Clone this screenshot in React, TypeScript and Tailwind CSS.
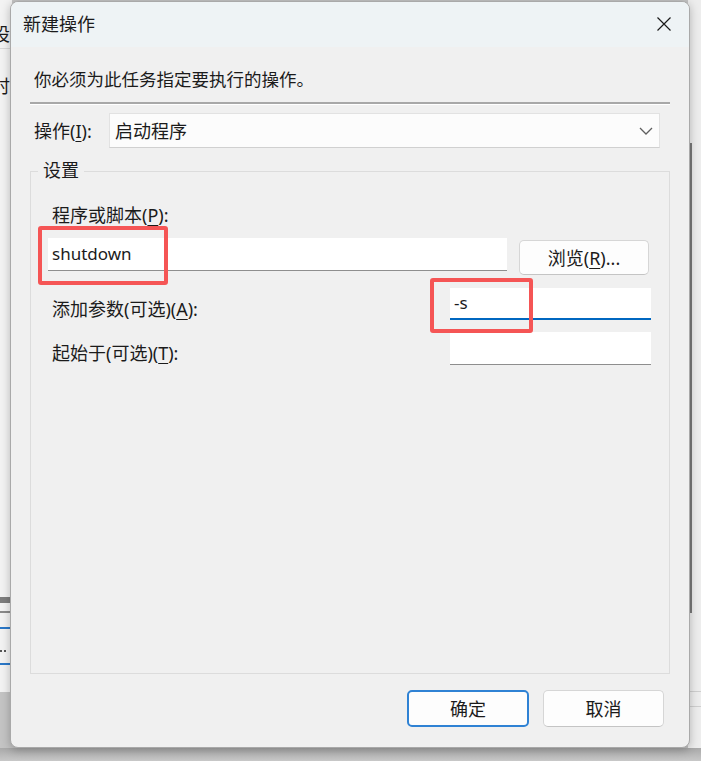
import React from "react";

const font = { fontFamily: '"Noto Sans", "Noto Sans CJK SC", sans-serif' };

function U({ c }: { c: string }) {
  return <span className="underline underline-offset-[3px] decoration-1">{c}</span>;
}

export default function App() {
  return (
    <div
      className="relative w-[701px] h-[761px] overflow-hidden bg-[#c4c4c4] text-[#1b1b1b] pt-[1px]"
      style={font}
    >
      {/* windows behind the dialog */}
      <div className="absolute left-0 top-0 w-[12px] h-[692px] bg-[#f3f3f3] overflow-hidden">
        <div className="absolute left-[-8px] top-[22px] text-[18px] leading-[24px]">设</div>
        <div className="absolute left-0 top-[48px] w-[12px] h-[1px] bg-[#d8d8d8]" />
        <div className="absolute left-[-8px] top-[74px] text-[18px] leading-[24px]">时</div>
        <div className="absolute left-0 top-[597px] w-[12px] h-[6px] bg-[#7d7d7d]" />
        <div className="absolute left-0 top-[611px] w-[12px] h-[2px] bg-[#8a8a8a]" />
        <div className="absolute left-0 top-[627px] w-[12px] h-[2px] bg-[#2a78c8]" />
        <div className="absolute left-0 top-[650px] flex gap-[2px]">
          <span className="w-[2px] h-[2px] bg-[#555]" />
          <span className="w-[2px] h-[2px] bg-[#555]" />
        </div>
        <div className="absolute left-0 top-[663px] w-[12px] h-[2px] bg-[#2a78c8]" />
      </div>
      <div className="absolute left-[688px] top-0 w-[13px] h-[748px] bg-[#ededed]">
        <div className="absolute left-[2px] top-[143px] w-[2px] h-[470px] bg-[#7a7a7a]" />
        <div className="absolute left-0 top-[691px] w-[13px] h-[1px] bg-[#cfcfcf]" />
        <div className="absolute left-0 top-[706px] w-[13px] h-[1px] bg-[#cfcfcf]" />
      </div>
      <div className="absolute left-0 top-[748px] w-[701px] h-[13px] bg-gradient-to-b from-[#a9a9a9] to-[#c8c8c8]" />

      {/* dialog */}
      <div className="relative ml-[10px] w-[680px] h-[747px] rounded-[8px] border border-[#a9a9a9] bg-[#f0f0f0] overflow-hidden flex flex-col shadow-[0_2px_10px_rgba(0,0,0,0.25)]">
        {/* title bar */}
        <div className="h-[45px] shrink-0 bg-[#eef3f5] flex items-center justify-between pl-[12px] pr-[18px] pb-[2px]">
          <span className="text-[18px] leading-[24px]">新建操作</span>
          <svg width="14" height="14" viewBox="0 0 14 14">
            <path d="M0.5 0.5 L13.5 13.5 M13.5 0.5 L0.5 13.5" stroke="#1a1a1a" strokeWidth="1.2" fill="none" />
          </svg>
        </div>

        {/* body */}
        <div className="flex flex-col">
          <div className="mt-[20px] ml-[23px] text-[17.5px] leading-[24px]">你必须为此任务指定要执行的操作。</div>
          <div className="mt-[11px] mx-[19px] border-t-2 border-t-[#a8a8a8] border-b border-b-white" />

          <div className="mt-[8px] ml-[23px] flex items-center">
            <div className="w-[75px] text-[18px] leading-[24px]">
              操作(<U c="I" />):
            </div>
            <div className="w-[551px] h-[35px] bg-[#fcfcfc] border border-[#e2e2e2] border-b-[#d0d0d0] flex items-center justify-between pl-[5px] pr-[6px]">
              <span className="text-[18px] leading-[24px]">启动程序</span>
              <svg width="14" height="8" viewBox="0 0 14 8">
                <path d="M1 1 L7 7 L13 1" stroke="#5f5f5f" strokeWidth="1.3" fill="none" />
              </svg>
            </div>
          </div>

          {/* group box */}
          <div className="mt-[23px] mx-[19px] h-[503px] border border-[#dcdcdc]">
            <div className="-mt-[14px] ml-[7px] w-fit bg-[#f0f0f0] px-[5px] text-[18px] leading-[24px]">设置</div>
            <div className="pl-[17px] pr-[18px] flex flex-col">
              <div className="mt-[21px] pl-[4px] text-[18px] leading-[24px]">
                程序或脚本(<U c="P" />):
              </div>
              <div className="mt-[11px] flex items-start gap-[12px]">
                <div className="w-[459px] h-[33px] bg-white border-b border-b-[#8e8e8e] flex items-center pl-[4px]">
                  <span className="text-[17px] leading-[24px]">shutdown</span>
                </div>
                <div className="mt-[2px] w-[130px] h-[35px] rounded-[5px] bg-[#fdfdfd] border border-[#d6d6d6] border-b-[#c4c4c4] flex items-center justify-center text-[18px] leading-[24px]">
                  浏览(<U c="R" />)...
                </div>
              </div>
              <div className="mt-[13px] flex items-start justify-between">
                <div className="mt-[9px] pl-[4px] text-[18px] leading-[24px]">
                  添加参数(可选)(<U c="A" />):
                </div>
                <div className="w-[201px] h-[32px] bg-white border-b-2 border-b-[#0067c0] flex items-center pl-[4px]">
                  <span className="text-[17px] leading-[24px]">-s</span>
                </div>
              </div>
              <div className="mt-[11px] flex items-start justify-between">
                <div className="mt-[9px] pl-[4px] text-[18px] leading-[24px]">
                  起始于(可选)(<U c="T" />):
                </div>
                <div className="w-[201px] h-[33px] bg-white border-b border-b-[#8e8e8e]" />
              </div>
            </div>
          </div>

          {/* buttons */}
          <div className="mt-[16px] pr-[25px] flex justify-end gap-[14px]">
            <div className="w-[122px] h-[37px] rounded-[5px] bg-[#fdfdfd] border-2 border-[#2f82d4] flex items-center justify-center text-[18px] leading-[24px]">
              确定
            </div>
            <div className="w-[121px] h-[37px] rounded-[5px] bg-[#fdfdfd] border border-[#d6d6d6] border-b-[#c4c4c4] flex items-center justify-center text-[18px] leading-[24px]">
              取消
            </div>
          </div>
        </div>
      </div>

      {/* red highlight boxes */}
      <div className="absolute left-[38px] top-[226px] w-[130px] h-[59px] border-4 border-[#f55555] rounded-[3px]" />
      <div className="absolute left-[430px] top-[278px] w-[103px] h-[55px] border-4 border-[#f55555] rounded-[3px]" />
    </div>
  );
}
